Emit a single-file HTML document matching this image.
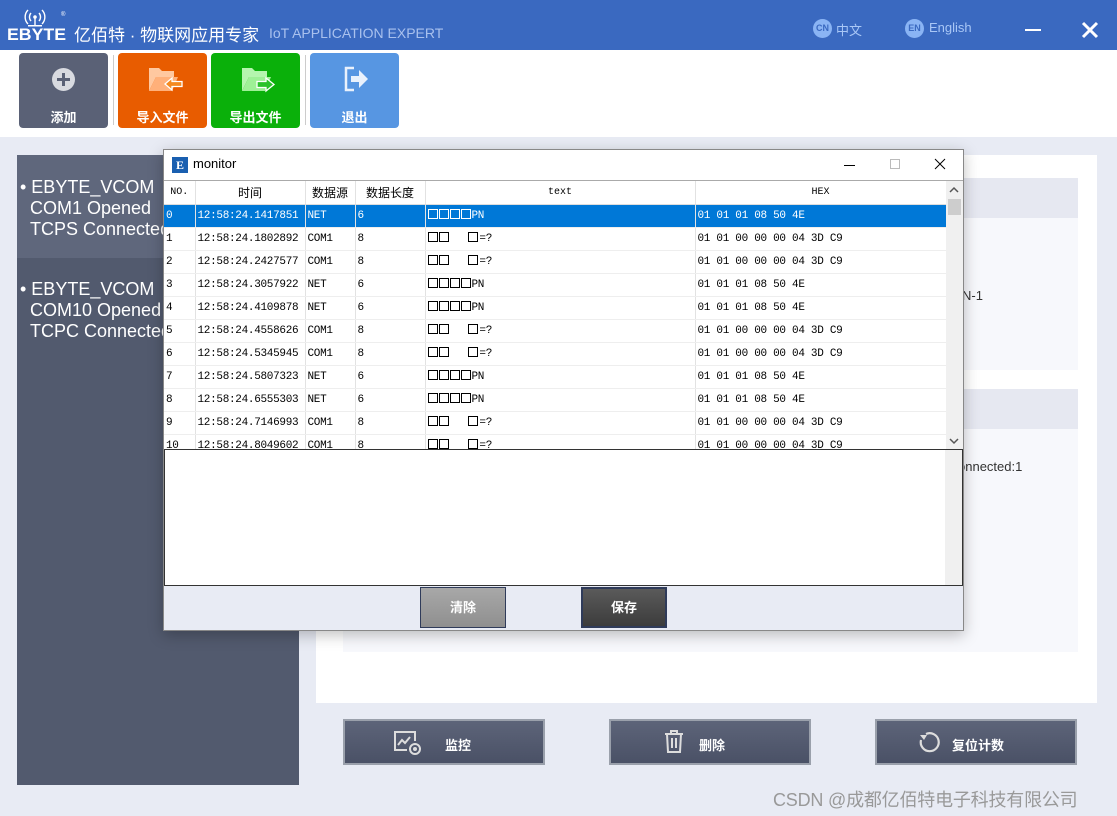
<!DOCTYPE html>
<html><head><meta charset="utf-8"><style>
*{margin:0;padding:0;box-sizing:border-box}
body{width:1117px;height:816px;overflow:hidden;background:#e8ebf4;font-family:"Liberation Sans","Noto Sans CJK SC",sans-serif;position:relative}
.a{position:absolute}
.hdr{left:0;top:0;width:1117px;height:50px;background:#3a69c0}
.tb{left:0;top:50px;width:1117px;height:87px;background:#fff}
.tbtn{top:53px;width:89px;height:75px;border-radius:4px;color:#fff;font-size:13px;font-weight:bold;text-align:center}
.tbtn span{position:absolute;left:0;right:0;bottom:2px}
.sep{top:55px;width:1px;height:70px;background:#ccc}
.mono{font-family:"Liberation Mono","Noto Sans CJK SC",monospace;font-size:11px}
table{border-collapse:collapse}
td{height:23px;border-right:1px solid #e2e2e2;border-bottom:1px solid #eee;padding-left:2px;font-family:"Liberation Mono","Noto Sans CJK SC",monospace;font-size:11px;letter-spacing:-0.3px;color:#000;white-space:nowrap;overflow:hidden}
tr.sel td{background:#0078d7;color:#fff}
th{height:23px;font-weight:normal;font-size:12px;border-right:1px solid #e2e2e2;border-bottom:1px solid #ddd}
.bx{display:inline-block;width:10px;height:10px;border:1px solid currentColor;margin-right:1px;vertical-align:-1px}
.bb{top:719px;width:202px;height:46px;border:2px solid #9aa0ab;background:linear-gradient(#5d6479,#4a5166);color:#fff;font-size:13px;font-weight:bold}
.lt{color:#fff;font-size:18px;line-height:21px;white-space:nowrap}
</style></head><body>
<div class="a hdr"></div>
<svg class="a" style="left:6px;top:8px" width="64" height="34"><g fill="none" stroke="#fff" stroke-width="1.4"><path d="M25 5a6 6 0 0 0 0 8M33 5a6 6 0 0 1 0 8M22 2a10 10 0 0 0 0 14M36 2a10 10 0 0 1 0 14"/></g><circle cx="29" cy="9" r="1.8" fill="#fff"/><rect x="28.3" y="10" width="1.4" height="8" fill="#fff"/><rect x="22" y="17" width="14" height="1.5" fill="#fff"/><text x="1" y="32" fill="#fff" font-size="17" font-weight="bold" font-family="Liberation Sans" textLength="59" lengthAdjust="spacingAndGlyphs">EBYTE</text><text x="55" y="8" fill="#fff" font-size="6">®</text></svg>
<div class="a" style="left:74px;top:21px;color:#fff;font-size:17px">亿佰特 · 物联网应用专家</div>
<div class="a" style="left:269px;top:25px;color:#a9c1ee;font-size:14px">IoT APPLICATION EXPERT</div>
<div class="a" style="left:813px;top:19px;width:19px;height:19px;border-radius:50%;background:#8ab4f4;color:#3a69c0;font-size:9px;font-weight:bold;text-align:center;line-height:19px">CN</div>
<div class="a" style="left:836px;top:20px;color:#a9c7f6;font-size:13px">中文</div>
<div class="a" style="left:905px;top:19px;width:19px;height:19px;border-radius:50%;background:#8ab4f4;color:#3a69c0;font-size:9px;font-weight:bold;text-align:center;line-height:19px">EN</div>
<div class="a" style="left:929px;top:20px;color:#a9c7f6;font-size:13px">English</div>
<div class="a" style="left:1025px;top:29px;width:16px;height:2px;background:#fff"></div>
<svg class="a" style="left:1081px;top:21px" width="18" height="18"><path d="M2 2L16 16M16 2L2 16" stroke="#fff" stroke-width="3"/></svg>
<div class="a tb"></div>
<div class="a tbtn" style="left:19px;background:#5a6176"><svg class="a" style="left:32px;top:14px" width="25" height="25"><circle cx="12.5" cy="12.5" r="11.5" fill="#d8dae0"/><path d="M12.5 6v13M6 12.5h13" stroke="#5a6176" stroke-width="3"/></svg><span>添加</span></div>
<div class="a sep" style="left:113px"></div>
<div class="a tbtn" style="left:118px;background:#e85c00"><svg class="a" style="left:28px;top:12px" width="40" height="32"><path d="M3 3h10l3 3h12v6H10L3 26z" fill="#ffc8a0"/><path d="M10 12h22l-6 14H3z" fill="#ffb07a"/><path d="M19 19l7-6v3.5h10v5H26V25z" fill="#f48a20" stroke="#fff" stroke-width="1.3"/></svg><span>导入文件</span></div>
<div class="a tbtn" style="left:211px;background:#0ab00a"><svg class="a" style="left:28px;top:12px" width="40" height="32"><path d="M3 3h10l3 3h12v6H10L3 26z" fill="#b5f5ae"/><path d="M10 12h22l-6 14H3z" fill="#9ef096"/><path d="M18 16.5h9V13l8 6.5-8 6.5v-3.5h-9z" fill="#2bc22b" stroke="#fff" stroke-width="1.3"/></svg><span>导出文件</span></div>
<div class="a sep" style="left:305px"></div>
<div class="a tbtn" style="left:310px;background:#5796e2"><svg class="a" style="left:33px;top:12px" width="28" height="28"><path d="M11 3H3v22h8" fill="none" stroke="#e9f1fc" stroke-width="2.5"/><path d="M8 11h8V5l9 9-9 9v-6H8z" fill="#e9f1fc"/></svg><span>退出</span></div>
<div class="a" style="left:17px;top:155px;width:282px;height:630px;background:#525a6e"></div>
<div class="a" style="left:17px;top:155px;width:282px;height:103px;background:#5f677c"></div>
<div class="a lt" style="left:20px;top:177px">• EBYTE_VCOM<br>&nbsp;&nbsp;COM1 Opened<br>&nbsp;&nbsp;TCPS Connected:</div>
<div class="a lt" style="left:20px;top:279px">• EBYTE_VCOM<br>&nbsp;&nbsp;COM10 Opened<br>&nbsp;&nbsp;TCPC Connected:</div>
<div class="a" style="left:316px;top:155px;width:781px;height:548px;background:#fff"></div>
<div class="a" style="left:343px;top:178px;width:735px;height:40px;background:#e6e8f1"></div>
<div class="a" style="left:343px;top:218px;width:735px;height:152px;background:#f7f8fc"></div>
<div class="a" style="left:343px;top:389px;width:735px;height:40px;background:#e6e8f1"></div>
<div class="a" style="left:343px;top:429px;width:735px;height:223px;background:#f7f8fc"></div>
<div class="a" style="left:962px;top:288px;font-size:13px;color:#333">N-1</div>
<div class="a" style="left:958px;top:459px;font-size:13px;color:#333">onnected:1</div>
<div class="a bb" style="left:343px"><svg class="a" style="left:48px;top:9px" width="34" height="26"><path d="M14 20H2V2h20v9" fill="none" stroke="#ddd" stroke-width="2"/><path d="M5 15l4-5 3 3 5-6" fill="none" stroke="#ddd" stroke-width="2"/><circle cx="22" cy="19" r="5" fill="none" stroke="#ddd" stroke-width="2"/><circle cx="22" cy="19" r="2" fill="#ddd"/></svg><span class="a" style="left:100px;top:14px">监控</span></div>
<div class="a bb" style="left:609px"><svg class="a" style="left:52px;top:8px" width="22" height="26"><path d="M2 5h18M8 5V2h6v3M4 5l1 18h12l1-18M9 9v10M13 9v10" fill="none" stroke="#ddd" stroke-width="2"/></svg><span class="a" style="left:88px;top:14px">删除</span></div>
<div class="a bb" style="left:875px"><svg class="a" style="left:40px;top:9px" width="26" height="26"><path d="M9 4a9 9 0 1 1-5 6" fill="none" stroke="#ddd" stroke-width="2.2"/><path d="M3 5l4 5 3-5z" fill="#ddd"/></svg><span class="a" style="left:75px;top:14px">复位计数</span></div>
<div class="a" style="left:773px;top:786px;font-size:18px;color:#999;letter-spacing:-0.2px">CSDN @成都亿佰特电子科技有限公司</div>
<!-- dialog -->
<div class="a" style="left:163px;top:149px;width:801px;height:482px;background:#fff;border:1px solid #888;box-shadow:0 4px 14px rgba(0,0,0,.25)">
 <div class="a" style="left:8px;top:7px;width:16px;height:16px;background:#1a5fb0;color:#fff;font-size:12px;font-weight:bold;font-family:'Liberation Serif';text-align:center;line-height:16px">E</div>
 <div class="a" style="left:29px;top:6px;font-size:13px">monitor</div>
 <div class="a" style="left:680px;top:15px;width:11px;height:1px;background:#000"></div>
 <div class="a" style="left:726px;top:9px;width:10px;height:10px;border:1px solid #bbb"></div>
 <svg class="a" style="left:770px;top:8px" width="12" height="12"><path d="M1 1L11 11M11 1L1 11" stroke="#000" stroke-width="1"/></svg>
 <div class="a" style="left:0;top:30px;width:799px;height:269px;border-top:1px solid #aaa;overflow:hidden">
  <table style="width:782px;table-layout:fixed">
   <colgroup><col style="width:31px"><col style="width:110px"><col style="width:50px"><col style="width:70px"><col style="width:270px"><col style="width:251px"></colgroup>
   <tr><th class="mono" style="font-size:10px">NO.</th><th>时间</th><th>数据源</th><th>数据长度</th><th class="mono" style="font-size:10px">text</th><th class="mono" style="font-size:10px">HEX</th></tr>
   <tr class="sel"><td>0</td><td>12:58:24.1417851</td><td>NET</td><td>6</td><td><i class="bx"></i><i class="bx"></i><i class="bx"></i><i class="bx"></i>PN</td><td>01 01 01 08 50 4E</td></tr>
   <tr><td>1</td><td>12:58:24.1802892</td><td>COM1</td><td>8</td><td><i class="bx"></i><i class="bx"></i>&nbsp;&nbsp;&nbsp;<i class="bx"></i>=?</td><td>01 01 00 00 00 04 3D C9</td></tr>
   <tr><td>2</td><td>12:58:24.2427577</td><td>COM1</td><td>8</td><td><i class="bx"></i><i class="bx"></i>&nbsp;&nbsp;&nbsp;<i class="bx"></i>=?</td><td>01 01 00 00 00 04 3D C9</td></tr>
   <tr><td>3</td><td>12:58:24.3057922</td><td>NET</td><td>6</td><td><i class="bx"></i><i class="bx"></i><i class="bx"></i><i class="bx"></i>PN</td><td>01 01 01 08 50 4E</td></tr>
   <tr><td>4</td><td>12:58:24.4109878</td><td>NET</td><td>6</td><td><i class="bx"></i><i class="bx"></i><i class="bx"></i><i class="bx"></i>PN</td><td>01 01 01 08 50 4E</td></tr>
   <tr><td>5</td><td>12:58:24.4558626</td><td>COM1</td><td>8</td><td><i class="bx"></i><i class="bx"></i>&nbsp;&nbsp;&nbsp;<i class="bx"></i>=?</td><td>01 01 00 00 00 04 3D C9</td></tr>
   <tr><td>6</td><td>12:58:24.5345945</td><td>COM1</td><td>8</td><td><i class="bx"></i><i class="bx"></i>&nbsp;&nbsp;&nbsp;<i class="bx"></i>=?</td><td>01 01 00 00 00 04 3D C9</td></tr>
   <tr><td>7</td><td>12:58:24.5807323</td><td>NET</td><td>6</td><td><i class="bx"></i><i class="bx"></i><i class="bx"></i><i class="bx"></i>PN</td><td>01 01 01 08 50 4E</td></tr>
   <tr><td>8</td><td>12:58:24.6555303</td><td>NET</td><td>6</td><td><i class="bx"></i><i class="bx"></i><i class="bx"></i><i class="bx"></i>PN</td><td>01 01 01 08 50 4E</td></tr>
   <tr><td>9</td><td>12:58:24.7146993</td><td>COM1</td><td>8</td><td><i class="bx"></i><i class="bx"></i>&nbsp;&nbsp;&nbsp;<i class="bx"></i>=?</td><td>01 01 00 00 00 04 3D C9</td></tr>
   <tr><td>10</td><td>12:58:24.8049602</td><td>COM1</td><td>8</td><td><i class="bx"></i><i class="bx"></i>&nbsp;&nbsp;&nbsp;<i class="bx"></i>=?</td><td>01 01 00 00 00 04 3D C9</td></tr>
  </table>
  <div class="a" style="left:782px;top:0;width:17px;height:269px;background:#f0f0f0"></div>
  <div class="a" style="left:784px;top:18px;width:13px;height:16px;background:#cdcdcd"></div>
  <svg class="a" style="left:785px;top:5px" width="10" height="8"><path d="M1 6l4-4 4 4" fill="none" stroke="#555" stroke-width="1.5"/></svg>
  <svg class="a" style="left:785px;top:256px" width="10" height="8"><path d="M1 2l4 4 4-4" fill="none" stroke="#555" stroke-width="1.5"/></svg>
 </div>
 <div class="a" style="left:0;top:299px;width:799px;height:137px;border:1px solid #333;background:#fff"><div class="a" style="right:0;top:0;width:17px;height:135px;background:#f0f0f0"></div></div>
 <div class="a" style="left:0;top:436px;width:799px;height:44px;background:#e8ebf4"></div>
 <div class="a" style="left:256px;top:437px;width:86px;height:41px;border:1px solid #2f3b5a;background:linear-gradient(#a8a8a8,#8f8f8f);color:#fff;font-size:13px;font-weight:bold;text-align:center;line-height:40px">清除</div>
 <div class="a" style="left:417px;top:437px;width:86px;height:41px;border:2px solid #2f3b5a;background:linear-gradient(#5a5a5a,#3c3c3c);color:#fff;font-size:13px;font-weight:bold;text-align:center;line-height:38px">保存</div>
</div>
</body></html>
